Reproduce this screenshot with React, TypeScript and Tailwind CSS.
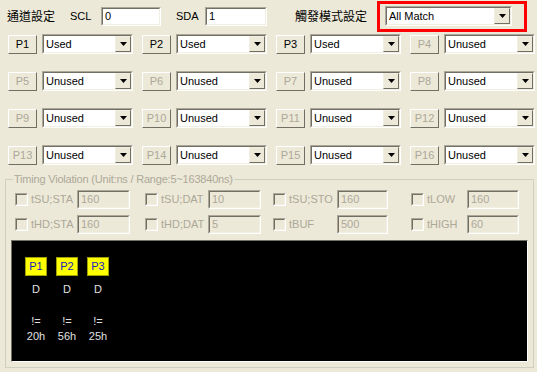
import React from "react";

const sunken =
  "border border-t-[#aca899] border-l-[#aca899] border-b-white border-r-white";
const sunkenInner =
  "border border-t-[#716f64] border-l-[#716f64] border-b-[#f1efe2] border-r-[#f1efe2]";

function Arrow() {
  return (
    <div className="flex h-full w-[16px] items-center justify-center border border-t-[#f1efe2] border-l-[#f1efe2] border-b-[#716f64] border-r-[#716f64] bg-[#ece9d8]">
      <svg width="7" height="4" viewBox="0 0 7 4">
        <path d="M0 0h7L3.5 4z" fill="#000" />
      </svg>
    </div>
  );
}

function Combo({ value, width }: { value: string; width: string }) {
  return (
    <div className={`flex h-[20px] ${width} ${sunken}`}>
      <div className={`flex flex-1 items-center bg-white ${sunkenInner}`}>
        <span className="flex-1 pl-[2px] text-[11px] leading-[16px] text-black">{value}</span>
        <Arrow />
      </div>
    </div>
  );
}

function TextBox({ value, width, disabled }: { value: string; width: string; disabled?: boolean }) {
  return (
    <div className={`flex h-[19px] ${width} ${sunken}`}>
      <div
        className={`flex flex-1 items-center pl-[2px] text-[11px] ${sunkenInner} ${
          disabled ? "bg-[#ece9d8] text-[#aca899]" : "bg-white text-black"
        }`}
      >
        {value}
      </div>
    </div>
  );
}

const ports = Array.from({ length: 16 }, (_, i) => ({ n: i + 1, used: i < 3 }));

const timing = [
  [
    { label: "tSU;STA", value: "160", w: "w-[130px]", lw: "w-[49px]", iw: "w-[53px]" },
    { label: "tSU;DAT", value: "10", w: "w-[128px]", lw: "w-[50px]", iw: "w-[53px]" },
    { label: "tSU;STO", value: "160", w: "w-[138px]", lw: "w-[51px]", iw: "w-[51px]" },
    { label: "tLOW", value: "160", w: "w-[120px]", lw: "w-[43px]", iw: "w-[52px]" },
  ],
  [
    { label: "tHD;STA", value: "160", w: "w-[130px]", lw: "w-[49px]", iw: "w-[53px]" },
    { label: "tHD;DAT", value: "5", w: "w-[128px]", lw: "w-[50px]", iw: "w-[53px]" },
    { label: "tBUF", value: "500", w: "w-[138px]", lw: "w-[51px]", iw: "w-[51px]" },
    { label: "tHIGH", value: "60", w: "w-[120px]", lw: "w-[43px]", iw: "w-[52px]" },
  ],
];

const triggers = [
  { p: "P1", v: "20h" },
  { p: "P2", v: "56h" },
  { p: "P3", v: "25h" },
];

export default function App() {
  return (
    <div className="h-[372px] w-[537px] overflow-hidden bg-[#ece9d8] font-['Liberation_Sans','Noto_Sans_CJK_TC',sans-serif] text-[11px] text-black">
      {/* header row */}
      <div className="flex h-[32px] items-center pl-[7px]">
        <span className="w-[63px] font-['Noto_Sans_CJK_TC',sans-serif] text-[12px]">通道設定</span>
        <span className="w-[31px]">SCL</span>
        <TextBox value="0" width="w-[60px]" />
        <span className="w-[44px] pl-[15px]">SDA</span>
        <TextBox value="1" width="w-[62px]" />
        <span className="w-[110px] pl-[28px] font-['Noto_Sans_CJK_TC',sans-serif] text-[12px]">觸發模式設定</span>
        <div className="flex h-[31px] w-[150px] items-center border-[3px] border-[#ff0000] pl-[5px]">
          <Combo value="All Match" width="w-[127px]" />
        </div>
      </div>

      {/* ports */}
      <div className="mt-[2px] grid grid-cols-[repeat(4,134px)] gap-y-[17px] pl-[8px]">
        {ports.map((p) => (
          <div key={p.n} className="flex h-[20px] items-center gap-[5px]">
            <button
              className={`flex h-[19px] w-[29px] items-center justify-center border border-t-white border-l-white border-b-[#716f64] border-r-[#716f64] bg-[#ece9d8] text-[11px] ${
                p.used ? "text-black" : "text-[#aca899]"
              }`}
            >
              P{p.n}
            </button>
            <Combo value={p.used ? "Used" : "Unused"} width="w-[91px]" />
          </div>
        ))}
      </div>

      {/* timing group */}
      <fieldset className="ml-[5px] mt-[7px] w-[529px] border border-[#d0d0bf]">
        <legend className="ml-[7px] px-[1px] text-[11px] leading-[14px] tracking-[-0.2px] text-[#aca899]">
          Timing Violation (Unit:ns / Range:5~163840ns)
        </legend>
        <div className="mt-[4px] flex flex-col gap-[7px] pl-[9px]">
          {timing.map((row, ri) => (
            <div key={ri} className="flex h-[18px] items-center">
              {row.map((c) => (
                <div key={c.label} className={`flex items-center ${c.w}`}>
                  <div className={`h-[13px] w-[13px] ${sunken}`}>
                    <div className={`h-full w-full bg-[#ece9d8] ${sunkenInner}`} />
                  </div>
                  <span className={`${c.lw} pl-[3px] text-[#aca899]`}>{c.label}</span>
                  <TextBox value={c.value} width={c.iw} disabled />
                </div>
              ))}
            </div>
          ))}
        </div>

        <div className="mx-[5px] mb-[5px] mt-[7px] h-[122px] border border-t-[#716f64] border-l-[#716f64] border-b-white border-r-white bg-black">
          <div className="flex gap-[9px] pl-[13px] pt-[16px]">
            {triggers.map((t) => (
              <div key={t.p} className="flex w-[22px] flex-col items-center text-[11px] leading-[13px] text-[#e0e0e0]">
                <div className="flex h-[19px] w-[22px] items-center justify-center border border-[#a0a000] bg-[#ffff00] text-[#2020c0]">
                  {t.p}
                </div>
                <span className="mt-[7px]">D</span>
                <span className="mt-[19px]">!=</span>
                <span className="mt-[2px] whitespace-nowrap">{t.v}</span>
              </div>
            ))}
          </div>
        </div>
      </fieldset>
    </div>
  );
}
